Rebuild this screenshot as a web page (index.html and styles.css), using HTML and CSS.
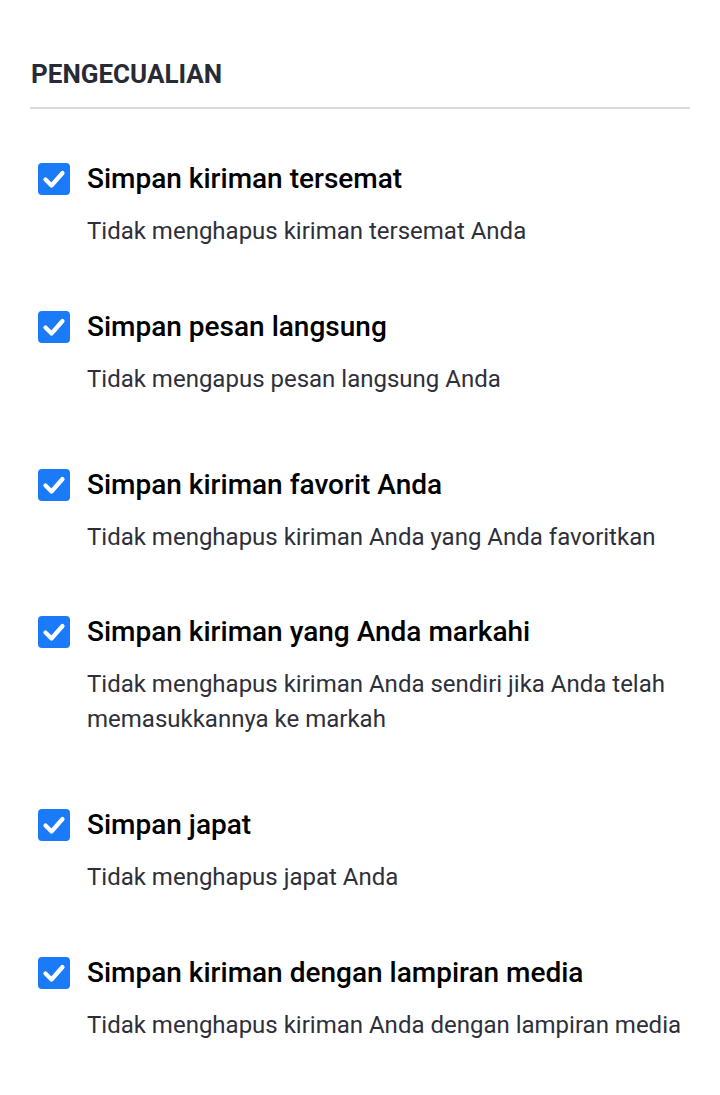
FILE: index.html
```html
<!DOCTYPE html>
<html lang="id">
<head>
<meta charset="utf-8">
<link rel="stylesheet" href="styles.css">
</head>
<body>
<main class="page">
  <h4 class="section-title">PENGECUALIAN</h4>

  <div class="fields-row">
    <label class="field">
      <span class="field-head">
        <span class="check"><svg viewBox="0 0 32 32" width="32" height="32"><path d="M7.5 16.5 L13.5 22.5 L24.5 10" fill="none" stroke="#fff" stroke-width="4.2" stroke-linecap="round" stroke-linejoin="round"/></svg></span>
        <span class="field-label">Simpan kiriman tersemat</span>
      </span>
      <span class="field-hint">Tidak menghapus kiriman tersemat Anda</span>
    </label>
    <label class="field">
      <span class="field-head">
        <span class="check"><svg viewBox="0 0 32 32" width="32" height="32"><path d="M7.5 16.5 L13.5 22.5 L24.5 10" fill="none" stroke="#fff" stroke-width="4.2" stroke-linecap="round" stroke-linejoin="round"/></svg></span>
        <span class="field-label">Simpan pesan langsung</span>
      </span>
      <span class="field-hint">Tidak mengapus pesan langsung Anda</span>
    </label>
  </div>

  <div class="fields-row">
    <label class="field">
      <span class="field-head">
        <span class="check"><svg viewBox="0 0 32 32" width="32" height="32"><path d="M7.5 16.5 L13.5 22.5 L24.5 10" fill="none" stroke="#fff" stroke-width="4.2" stroke-linecap="round" stroke-linejoin="round"/></svg></span>
        <span class="field-label">Simpan kiriman favorit Anda</span>
      </span>
      <span class="field-hint">Tidak menghapus kiriman Anda yang Anda favoritkan</span>
    </label>
    <label class="field">
      <span class="field-head">
        <span class="check"><svg viewBox="0 0 32 32" width="32" height="32"><path d="M7.5 16.5 L13.5 22.5 L24.5 10" fill="none" stroke="#fff" stroke-width="4.2" stroke-linecap="round" stroke-linejoin="round"/></svg></span>
        <span class="field-label">Simpan kiriman yang Anda markahi</span>
      </span>
      <span class="field-hint">Tidak menghapus kiriman Anda sendiri jika Anda telah memasukkannya ke markah</span>
    </label>
  </div>

  <div class="fields-row">
    <label class="field">
      <span class="field-head">
        <span class="check"><svg viewBox="0 0 32 32" width="32" height="32"><path d="M7.5 16.5 L13.5 22.5 L24.5 10" fill="none" stroke="#fff" stroke-width="4.2" stroke-linecap="round" stroke-linejoin="round"/></svg></span>
        <span class="field-label">Simpan japat</span>
      </span>
      <span class="field-hint">Tidak menghapus japat Anda</span>
    </label>
    <label class="field">
      <span class="field-head">
        <span class="check"><svg viewBox="0 0 32 32" width="32" height="32"><path d="M7.5 16.5 L13.5 22.5 L24.5 10" fill="none" stroke="#fff" stroke-width="4.2" stroke-linecap="round" stroke-linejoin="round"/></svg></span>
        <span class="field-label">Simpan kiriman dengan lampiran media</span>
      </span>
      <span class="field-hint">Tidak menghapus kiriman Anda dengan lampiran media</span>
    </label>
  </div>
</main>
</body>
</html>
```
FILE: styles.css
```css
html, body {
  margin: 0;
  padding: 0;
  background: #ffffff;
}

body {
  font-family: Roboto, "Liberation Sans", Arial, sans-serif;
  color: #000;
}

.page {
  padding: 58px 30px 0 30px;
}

.section-title {
  margin: 0;
  font-size: 26px;
  line-height: 32px;
  font-weight: 700;
  color: #282a36;
  padding: 0 0 17px 1px;
  border-bottom: 2px solid #d9dae1;
}

.fields-row {
  display: flex;
  flex-direction: column;
  gap: 59.5px;
  margin-top: 70px;
}

.fields-row:first-of-type {
  margin-top: 52px;
}

.field {
  display: flex;
  flex-direction: column;
  gap: 17px;
}

.field-head {
  display: flex;
  align-items: center;
  gap: 17px;
  padding-left: 8px;
}

.check {
  width: 32px;
  height: 32px;
  flex: none;
  border-radius: 4px;
  background: #1a7af8;
  display: flex;
}

.field-label {
  font-size: 28px;
  line-height: 36px;
  font-weight: 500;
  color: #000;
}

.field-hint {
  padding-left: 57px;
  font-size: 24px;
  line-height: 35px;
  color: #2e2f3a;
}
```
